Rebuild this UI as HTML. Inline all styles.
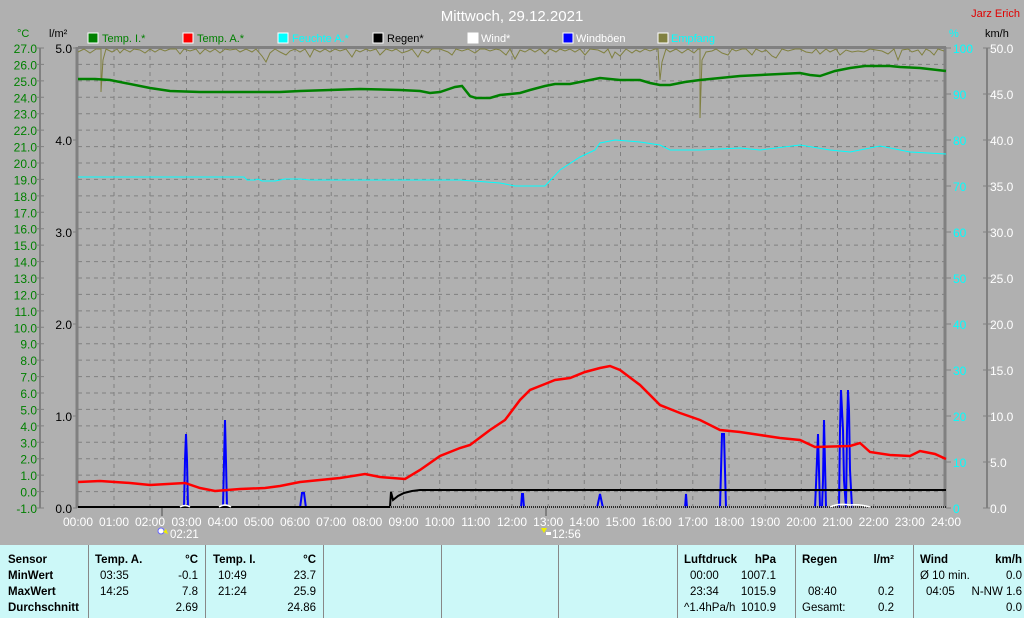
<!DOCTYPE html>
<html><head><meta charset="utf-8"><style>
body{margin:0;width:1024px;height:618px;overflow:hidden;background:#b0b0b0;font-family:"Liberation Sans",sans-serif}
svg{position:absolute;left:0;top:0}
text{font-family:"Liberation Sans",sans-serif;font-size:12px}
#tbl{position:absolute;left:0;top:545px;width:1024px;height:73px;background:#ccf8f8;font-size:11.5px;color:#000}
.c{position:absolute;top:0;height:73px;border-left:1px solid #888}
.r{position:absolute;white-space:nowrap}
.b{font-weight:bold}
</style></head><body>
<svg width="1024" height="545" viewBox="0 0 1024 545">
<g stroke="#808080" stroke-dasharray="4,4" stroke-width="1">
<line x1="78" y1="64.4" x2="944" y2="64.4"/><line x1="78" y1="80.9" x2="944" y2="80.9"/><line x1="78" y1="97.3" x2="944" y2="97.3"/><line x1="78" y1="113.7" x2="944" y2="113.7"/><line x1="78" y1="130.1" x2="944" y2="130.1"/><line x1="78" y1="146.6" x2="944" y2="146.6"/><line x1="78" y1="163" x2="944" y2="163"/><line x1="78" y1="179.4" x2="944" y2="179.4"/><line x1="78" y1="195.9" x2="944" y2="195.9"/><line x1="78" y1="212.3" x2="944" y2="212.3"/><line x1="78" y1="228.7" x2="944" y2="228.7"/><line x1="78" y1="245.1" x2="944" y2="245.1"/><line x1="78" y1="261.6" x2="944" y2="261.6"/><line x1="78" y1="278" x2="944" y2="278"/><line x1="78" y1="294.4" x2="944" y2="294.4"/><line x1="78" y1="310.9" x2="944" y2="310.9"/><line x1="78" y1="327.3" x2="944" y2="327.3"/><line x1="78" y1="343.7" x2="944" y2="343.7"/><line x1="78" y1="360.1" x2="944" y2="360.1"/><line x1="78" y1="376.6" x2="944" y2="376.6"/><line x1="78" y1="393" x2="944" y2="393"/><line x1="78" y1="409.4" x2="944" y2="409.4"/><line x1="78" y1="425.9" x2="944" y2="425.9"/><line x1="78" y1="442.3" x2="944" y2="442.3"/><line x1="78" y1="458.7" x2="944" y2="458.7"/><line x1="78" y1="475.1" x2="944" y2="475.1"/><line x1="78" y1="491.6" x2="944" y2="491.6"/>
<line x1="114" y1="48" x2="114" y2="508"/><line x1="150" y1="48" x2="150" y2="508"/><line x1="186.5" y1="48" x2="186.5" y2="508"/><line x1="222.7" y1="48" x2="222.7" y2="508"/><line x1="258.8" y1="48" x2="258.8" y2="508"/><line x1="295" y1="48" x2="295" y2="508"/><line x1="331.2" y1="48" x2="331.2" y2="508"/><line x1="367.3" y1="48" x2="367.3" y2="508"/><line x1="403.5" y1="48" x2="403.5" y2="508"/><line x1="439.7" y1="48" x2="439.7" y2="508"/><line x1="475.8" y1="48" x2="475.8" y2="508"/><line x1="512" y1="48" x2="512" y2="508"/><line x1="548.2" y1="48" x2="548.2" y2="508"/><line x1="584.3" y1="48" x2="584.3" y2="508"/><line x1="620.5" y1="48" x2="620.5" y2="508"/><line x1="656.7" y1="48" x2="656.7" y2="508"/><line x1="692.8" y1="48" x2="692.8" y2="508"/><line x1="729" y1="48" x2="729" y2="508"/><line x1="765.2" y1="48" x2="765.2" y2="508"/><line x1="801.3" y1="48" x2="801.3" y2="508"/><line x1="837.5" y1="48" x2="837.5" y2="508"/><line x1="873.7" y1="48" x2="873.7" y2="508"/><line x1="909.8" y1="48" x2="909.8" y2="508"/>
</g>
<g stroke="#808080" stroke-width="3"><line x1="78" y1="47.5" x2="946" y2="47.5"/><line x1="77" y1="47" x2="77" y2="508"/><line x1="945" y1="47" x2="945" y2="508"/></g>
<g stroke="#808080" stroke-width="2"><line x1="40" y1="48" x2="40" y2="508"/><line x1="987" y1="48" x2="987" y2="508"/></g>
<line x1="162" y1="508" x2="162" y2="516" stroke="#808080" stroke-width="2"/>
<line x1="546" y1="508" x2="546" y2="516" stroke="#808080" stroke-width="2"/>
<!-- title -->
<text x="512" y="21" fill="#fff" font-size="15" text-anchor="middle" style="font-size:15px">Mittwoch, 29.12.2021</text>
<text x="1020" y="17" fill="#e00000" text-anchor="end" style="font-size:11px">Jarz Erich</text>
<!-- axis headers -->
<text x="17" y="37" fill="#008000" style="font-size:11px">°C</text>
<text x="49" y="37" fill="#000" style="font-size:11px">l/m²</text>
<text x="949" y="37" fill="#00ffff" style="font-size:11px">%</text>
<text x="985" y="37" fill="#000" style="font-size:11px">km/h</text>
<!-- legend -->
<rect x="88" y="33" width="10" height="10" fill="#008000" stroke="#fff"/><text x="102" y="42" fill="#008000" style="font-size:11px">Temp. I.*</text>
<rect x="183" y="33" width="10" height="10" fill="#ff0000" stroke="#fff"/><text x="197" y="42" fill="#008000" style="font-size:11px">Temp. A.*</text>
<rect x="278" y="33" width="10" height="10" fill="#00ffff" stroke="#fff"/><text x="292" y="42" fill="#00ffff" style="font-size:11px">Feuchte A.*</text>
<rect x="373" y="33" width="10" height="10" fill="#000" stroke="#fff"/><text x="387" y="42" fill="#000" style="font-size:11px">Regen*</text>
<rect x="468" y="33" width="10" height="10" fill="#fff" stroke="#fff"/><text x="481" y="42" fill="#fff" style="font-size:11px">Wind*</text>
<rect x="563" y="33" width="10" height="10" fill="#0000ff" stroke="#fff"/><text x="576" y="42" fill="#fff" style="font-size:11px">Windböen</text>
<rect x="658" y="33" width="10" height="10" fill="#808040" stroke="#fff"/><text x="671" y="42" fill="#00ffff" style="font-size:11px">Empfang</text>
<!-- left °C labels -->
<g fill="#008000" text-anchor="end" style="font-size:11.5px">
<text x="37" y="53">27.0</text><text x="37" y="69.4">26.0</text><text x="37" y="85.9">25.0</text><text x="37" y="102.3">24.0</text><text x="37" y="118.7">23.0</text><text x="37" y="135.1">22.0</text><text x="37" y="151.6">21.0</text><text x="37" y="168">20.0</text><text x="37" y="184.4">19.0</text><text x="37" y="200.9">18.0</text><text x="37" y="217.3">17.0</text><text x="37" y="233.7">16.0</text><text x="37" y="250.1">15.0</text><text x="37" y="266.6">14.0</text><text x="37" y="283">13.0</text><text x="37" y="299.4">12.0</text><text x="37" y="315.9">11.0</text><text x="37" y="332.3">10.0</text><text x="37" y="348.7">9.0</text><text x="37" y="365.1">8.0</text><text x="37" y="381.6">7.0</text><text x="37" y="398">6.0</text><text x="37" y="414.4">5.0</text><text x="37" y="430.9">4.0</text><text x="37" y="447.3">3.0</text><text x="37" y="463.7">2.0</text><text x="37" y="480.1">1.0</text><text x="37" y="496.6">0.0</text><text x="37" y="513">-1.0</text>
</g>
<g stroke="#808080"><path d="M36 48h8M36 64.4h8M36 80.9h8M36 97.3h8M36 113.7h8M36 130.1h8M36 146.6h8M36 163h8M36 179.4h8M36 195.9h8M36 212.3h8M36 228.7h8M36 245.1h8M36 261.6h8M36 278h8M36 294.4h8M36 310.9h8M36 327.3h8M36 343.7h8M36 360.1h8M36 376.6h8M36 393h8M36 409.4h8M36 425.9h8M36 442.3h8M36 458.7h8M36 475.1h8M36 491.6h8M36 508h8M73 48h4M73 140h4M73 232h4M73 324h4M73 416h4M73 508h4M946 48h5M946 94h5M946 140h5M946 186h5M946 232h5M946 278h5M946 324h5M946 370h5M946 416h5M946 462h5M946 508h5M983 48h8M983 94h8M983 140h8M983 186h8M983 232h8M983 278h8M983 324h8M983 370h8M983 416h8M983 462h8M983 508h8"/></g>
<g fill="#000" text-anchor="end" style="font-size:11.5px">
<text x="72" y="53">5.0</text><text x="72" y="145">4.0</text><text x="72" y="237">3.0</text><text x="72" y="329">2.0</text><text x="72" y="421">1.0</text><text x="72" y="513">0.0</text>
</g>
<g fill="#00ffff" style="font-size:11.5px">
<text x="953" y="53">100</text><text x="953" y="99">90</text><text x="953" y="145">80</text><text x="953" y="191">70</text><text x="953" y="237">60</text><text x="953" y="283">50</text><text x="953" y="329">40</text><text x="953" y="375">30</text><text x="953" y="421">20</text><text x="953" y="467">10</text><text x="953" y="513">0</text>
</g>
<g fill="#fff" style="font-size:11.5px">
<text x="990" y="53">50.0</text><text x="990" y="99">45.0</text><text x="990" y="145">40.0</text><text x="990" y="191">35.0</text><text x="990" y="237">30.0</text><text x="990" y="283">25.0</text><text x="990" y="329">20.0</text><text x="990" y="375">15.0</text><text x="990" y="421">10.0</text><text x="990" y="467">5.0</text><text x="990" y="513">0.0</text>
</g>
<g fill="#fff" text-anchor="middle" style="font-size:11.5px">
<text x="78" y="526">00:00</text><text x="114" y="526">01:00</text><text x="150" y="526">02:00</text><text x="186.5" y="526">03:00</text><text x="222.7" y="526">04:00</text><text x="258.8" y="526">05:00</text><text x="295" y="526">06:00</text><text x="331.2" y="526">07:00</text><text x="367.3" y="526">08:00</text><text x="403.5" y="526">09:00</text><text x="439.7" y="526">10:00</text><text x="475.8" y="526">11:00</text><text x="512" y="526">12:00</text><text x="548.2" y="526">13:00</text><text x="584.3" y="526">14:00</text><text x="620.5" y="526">15:00</text><text x="656.7" y="526">16:00</text><text x="692.8" y="526">17:00</text><text x="729" y="526">18:00</text><text x="765.2" y="526">19:00</text><text x="801.3" y="526">20:00</text><text x="837.5" y="526">21:00</text><text x="873.7" y="526">22:00</text><text x="909.8" y="526">23:00</text><text x="946" y="526">24:00</text>
</g>
<circle cx="161" cy="531" r="3" fill="#fff" stroke="#66f"/><path d="M163 532l3-3 2 5z" fill="#ee0"/><text x="170" y="538" fill="#fff" style="font-size:11.5px">02:21</text>
<path d="M541 528h6l-3 5z" fill="#ee0"/><rect x="546" y="532" width="5" height="3" fill="#fff"/><text x="552" y="538" fill="#fff" style="font-size:11.5px">12:56</text>
<!-- Empfang -->
<polyline fill="none" stroke="#808040" stroke-width="1" points="78,52 84,49 90,53 96,49 101,49 101,92 103,60 106,49 112,52 117,49 120,53 124,49 130,52 134,49 140,50 145,53 150,49 155,52 160,49 165,51 170,49 176,49 180,54 184,49 190,51 196,49 200,54 205,49 210,52 215,49 220,53 225,49 230,50 236,49 240,52 246,49 252,52 256,49 262,56 266,62 270,53 275,49 280,52 286,55 290,51 295,49 300,52 305,49 310,57 314,49 320,52 325,49 330,52 335,49 340,51 346,49 352,57 356,50 360,52 366,49 370,51 376,49 380,55 386,49 392,51 396,49 402,53 408,51 412,49 418,57 422,50 428,53 432,49 440,49 448,52 452,55 456,49 462,51 468,49 475,53 480,49 485,49 490,51 496,49 500,50 506,55 510,49 515,59 520,50 525,52 530,49 535,52 540,49 545,54 550,49 556,52 560,49 565,51 570,49 575,52 580,49 585,55 590,49 598,50 604,53 608,49 612,58 615,52 620,56 626,49 632,53 636,50 640,52 645,49 650,51 655,49 658,49 660,80 662,62 666,49 670,52 676,49 682,53 688,49 694,53 698,49 700,49 700,118 702,60 706,52 712,51 716,49 722,53 728,55 732,49 736,51 742,49 746,49 752,55 756,49 762,52 766,50 772,56 776,58 782,49 788,51 795,49 800,49 806,52 812,53 816,49 820,54 826,49 830,52 836,49 840,55 846,50 852,52 858,51 864,52 870,49 876,50 882,51 888,54 894,49 898,60 902,50 908,49 912,52 918,50 922,55 926,49 930,51 934,55 938,49 944,51"/>
<!-- Temp I -->
<polyline fill="none" stroke="#008000" stroke-width="2.5" points="78,79 95,79 110,80 150,88 170,91 200,92 280,92 300,91 360,89 400,90 420,91 430,93 440,92 455,87 462,86 470,96 476,98 490,98 500,95 520,93 530,90 545,86 555,84 570,84 590,80 600,78 620,80 640,80 650,83 660,85 670,85 685,82 700,80 740,76 780,74 800,73 810,75 820,76 835,71 850,68 865,66 890,66 900,67 920,68 946,71"/>
<!-- Humidity -->
<polyline fill="none" stroke="#00ffff" stroke-width="1" points="78,177 244,177 247,180 255,180 258,179 262,181 275,181 285,179 300,179 310,180 430,180 460,180 500,183 515,186 545,186 560,170 580,157 595,150 600,143 615,140 640,142 660,145 670,150 700,150 740,148 760,150 800,145 830,150 850,152 880,146 895,149 910,152 946,154"/>
<!-- Wind gusts -->
<g fill="none" stroke="#0000ff" stroke-width="2">
<path d="M184,508 L185,460 L186,434 L187,460 L188,508"/>
<path d="M223,508 L224,462 L225,420 L226,462 L227,508"/>
<path d="M300,508 L302,493 L304,493 L306,508"/>
<path d="M521,508 L522,494 L523,494 L524,508"/>
<path d="M597,508 L600,494 L603,508"/>
<path d="M685,508 L686,494 L687,508"/>
<path d="M720,508 L722,434 L724,434 L726,508"/>
<path d="M815,508 L816,485 L818,434 L820,508"/>
<path d="M822,508 L823,480 L824,420 L826,508"/>
<path d="M839,508 L840,430 L841,390 L843,430 L844,480 L846,508"/>
<path d="M846,508 L847,430 L848,390 L849,410 L850,470 L852,508"/>
</g>
<!-- Temp A -->
<polyline fill="none" stroke="#ff0000" stroke-width="2.5" points="78,482 100,481 130,483 150,485 185,483 200,488 215,491 240,489 265,488 280,486 300,482 340,478 365,474 380,477 405,479 420,470 440,456 460,448 470,445 490,430 505,420 520,400 530,390 545,384 555,380 570,378 585,372 600,368 610,366 620,370 640,385 660,405 680,413 700,420 720,430 740,432 760,435 780,438 800,440 815,447 850,446 860,443 870,452 890,455 910,456 920,451 935,454 946,459"/>
<!-- Rain -->
<polyline fill="none" stroke="#000" stroke-width="2" points="78,507 390,507 391,492 393,500 398,496 404,493 412,491 420,490 946,490"/>
<line x1="78" y1="507" x2="946" y2="507" stroke="#000" stroke-width="1.5"/>
<line x1="390" y1="507" x2="946" y2="507" stroke="#fff" stroke-width="1" stroke-dasharray="1,1"/>
<path d="M180,507 q5,-3 10,0 M219,507 q6,-4 12,0 M830,507 q8,-4 20,-2 q10,-1 20,2" stroke="#fff" stroke-width="1.5" fill="none"/>
</svg>
<div id="tbl">
<div class="c" style="left:88px"></div><div class="c" style="left:205px"></div><div class="c" style="left:323px"></div><div class="c" style="left:441px"></div><div class="c" style="left:558px"></div><div class="c" style="left:677px"></div><div class="c" style="left:795px"></div><div class="c" style="left:913px"></div>
<div class="r b" style="left:8px;top:9px">Sensor</div><div class="r b" style="left:8px;top:25px">MinWert</div><div class="r b" style="left:8px;top:41px">MaxWert</div><div class="r b" style="left:8px;top:57px">Durchschnitt</div>
<div class="r b" style="left:95px;top:9px">Temp. A.</div><div class="r b" style="right:826px;top:9px">°C</div>
<div class="r" style="left:100px;top:25px">03:35</div><div class="r" style="right:826px;top:25px">-0.1</div>
<div class="r" style="left:100px;top:41px">14:25</div><div class="r" style="right:826px;top:41px">7.8</div>
<div class="r" style="right:826px;top:57px">2.69</div>
<div class="r b" style="left:213px;top:9px">Temp. I.</div><div class="r b" style="right:708px;top:9px">°C</div>
<div class="r" style="left:218px;top:25px">10:49</div><div class="r" style="right:708px;top:25px">23.7</div>
<div class="r" style="left:218px;top:41px">21:24</div><div class="r" style="right:708px;top:41px">25.9</div>
<div class="r" style="right:708px;top:57px">24.86</div>
<div class="r b" style="left:684px;top:9px">Luftdruck</div><div class="r b" style="right:248px;top:9px">hPa</div>
<div class="r" style="left:690px;top:25px">00:00</div><div class="r" style="right:248px;top:25px">1007.1</div>
<div class="r" style="left:690px;top:41px">23:34</div><div class="r" style="right:248px;top:41px">1015.9</div>
<div class="r" style="left:684px;top:57px">^1.4hPa/h</div><div class="r" style="right:248px;top:57px">1010.9</div>
<div class="r b" style="left:802px;top:9px">Regen</div><div class="r b" style="right:130px;top:9px">l/m²</div>
<div class="r" style="left:808px;top:41px">08:40</div><div class="r" style="right:130px;top:41px">0.2</div>
<div class="r" style="left:802px;top:57px">Gesamt:</div><div class="r" style="right:130px;top:57px">0.2</div>
<div class="r b" style="left:920px;top:9px">Wind</div><div class="r b" style="right:2px;top:9px">km/h</div>
<div class="r" style="left:920px;top:25px">Ø 10 min.</div><div class="r" style="right:2px;top:25px">0.0</div>
<div class="r" style="left:926px;top:41px">04:05</div><div class="r" style="right:2px;top:41px">N-NW 1.6</div>
<div class="r" style="right:2px;top:57px">0.0</div>
</div>
</body></html>
